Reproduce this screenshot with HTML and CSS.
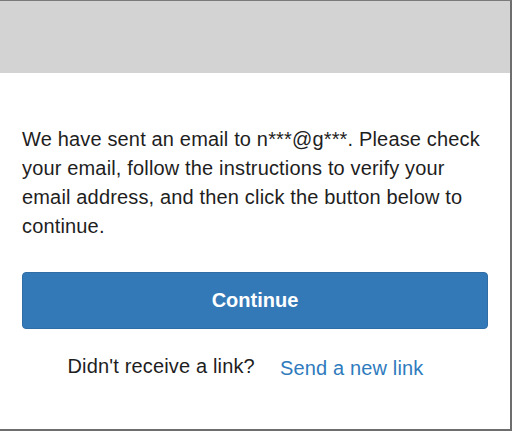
FILE: index.html
```html
<!DOCTYPE html>
<html lang="en">
<head>
<meta charset="utf-8">
<title>Verify your email</title>
<link rel="stylesheet" href="styles.css">
</head>
<body>
<div class="frame">
  <div class="header"></div>
  <div class="content">
    <p class="message">We have sent an email to n***@g***. Please check your email, follow the instructions to verify your email address, and then click the button below to continue.</p>
    <button class="btn-continue" type="button">Continue</button>
    <div class="resend">
      <span class="resend-label">Didn't receive a link?</span>
      <a class="resend-link" href="#">Send a new link</a>
    </div>
  </div>
</div>
</body>
</html>
```
FILE: styles.css
```css
html, body {
  margin: 0;
  padding: 0;
  background: #ffffff;
}
body {
  font-family: "Liberation Sans", Arial, sans-serif;
  color: #1e1e1e;
}
.frame {
  box-sizing: border-box;
  width: 512px;
  height: 431px;
  border-top: 1px solid #7a7a7a;
  border-right: 2px solid #6e6e6e;
  border-bottom: 2px solid #6e6e6e;
  background: #ffffff;
  display: flex;
  flex-direction: column;
}
.header {
  height: 72px;
  background: #d3d3d3;
  flex: none;
}
.content {
  padding: 52px 22px 0 22px;
  display: flex;
  flex-direction: column;
}
.message {
  margin: 0;
  font-size: 20px;
  line-height: 29px;
  letter-spacing: 0.16px;
}
.btn-continue {
  margin-top: 31px;
  height: 57px;
  width: 100%;
  background: #3479b7;
  border: 1px solid #2e6da6;
  border-radius: 4px;
  color: #ffffff;
  font-family: "Liberation Sans", Arial, sans-serif;
  font-size: 20px;
  font-weight: bold;
  cursor: pointer;
}
.resend {
  margin-top: 26px;
  display: flex;
  justify-content: center;
  align-items: baseline;
  gap: 25px;
  font-size: 20px;
  letter-spacing: 0.16px;
  padding-right: 19px;
}
.resend-label {
  color: #1e1e1e;
}
.resend-link {
  color: #2f7bbd;
  text-decoration: none;
  position: relative;
  top: 2px;
}
```
